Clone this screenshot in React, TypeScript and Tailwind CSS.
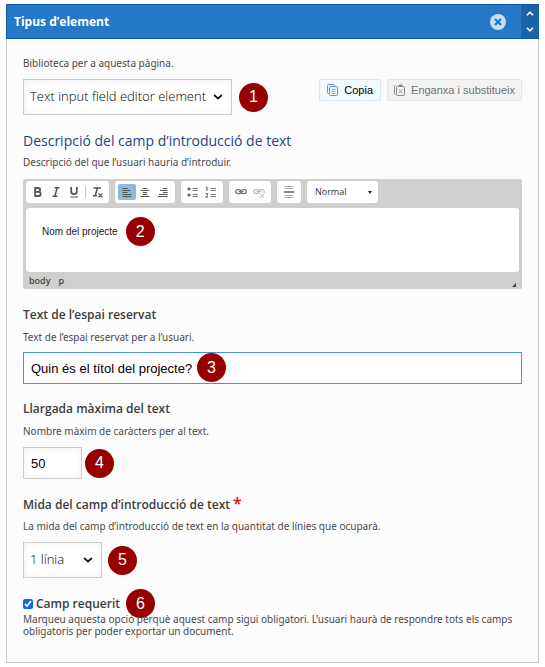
import type { ReactNode } from "react"
import { clsx } from "clsx"

// -----------------------------------------------------------------------------
// Small pieces
// -----------------------------------------------------------------------------

function StepBadge({ n, className }: { n: number; className?: string }) {
  return (
    <span
      className={clsx(
        "flex size-[29px] shrink-0 items-center justify-center rounded-full bg-[#970000]",
        "font-['Liberation_Sans'] text-base text-white",
        className
      )}
    >
      {n}
    </span>
  )
}

function Hint({ id, children }: { id?: string; children: ReactNode }) {
  return (
    <p id={id} className="font-['Noto_Sans'] text-[10px] leading-3 text-[#4a4a4a]">
      {children}
    </p>
  )
}

interface SelectBoxProps {
  id: string
  label?: string
  options: string[]
  className?: string
}

function SelectBox({ id, label, options, className }: SelectBoxProps) {
  return (
    <div className={clsx("relative", className)}>
      <select
        id={id}
        aria-label={label}
        className="block h-9 w-full appearance-none border border-[#ccc] bg-white pl-[6px] text-[13px] font-light text-black shadow-[inset_0_0_6px_#eee]"
      >
        {options.map((option) => (
          <option key={option}>{option}</option>
        ))}
      </select>
      <svg
        viewBox="0 0 10 6"
        className="pointer-events-none absolute top-[15px] right-[9px] h-[6px] w-[10px]"
        fill="none"
        stroke="#111"
        strokeWidth="1.8"
        aria-hidden
      >
        <path d="M1.2 1 5 4.6 8.8 1" />
      </svg>
    </div>
  )
}

// -----------------------------------------------------------------------------
// Editor toolbar
// -----------------------------------------------------------------------------

function ToolGroup({ children }: { children: ReactNode }) {
  return (
    <div className="flex h-[22px] items-center rounded-[3px] bg-white px-[3px]">
      {children}
    </div>
  )
}

interface ToolProps {
  label: string
  active?: boolean
  children: ReactNode
}

function Tool({ label, active, children }: ToolProps) {
  return (
    <button
      type="button"
      aria-label={label}
      aria-pressed={active}
      className={clsx(
        "flex h-4 w-[18px] items-center justify-center rounded-xs",
        active && "bg-[#8fb9e0]"
      )}
    >
      <svg
        viewBox="0 0 14 14"
        className="size-[14px]"
        fill="none"
        stroke="#555"
        aria-hidden
      >
        {children}
      </svg>
    </button>
  )
}

function EditorToolbar() {
  return (
    <div className="flex gap-[6px]">
      <ToolGroup>
        <Tool label="Negreta">
          <path d="M4.2 3h3a1.9 1.9 0 0 1 0 3.9h-3zM4.2 6.9h3.4a2 2 0 0 1 0 4.1H4.2z" strokeWidth="1.8" />
        </Tool>
        <Tool label="Cursiva">
          <path d="M5.5 2.8h5M3.5 11.2h5M8.2 2.8 5.8 11.2" strokeWidth="1.5" />
        </Tool>
        <Tool label="Subratllat">
          <path d="M4.2 2v4.6a2.8 2.6 0 0 0 5.6 0V2" strokeWidth="1.8" />
          <path d="M3 12h8" />
        </Tool>
        <span className="mx-[2px] h-3 w-px bg-[#ccc]" />
        <Tool label="Elimina el format">
          <path d="M3.5 3h7.5M7.5 3 5.2 10.5M3 10.8h4" strokeWidth="1.5" />
          <path d="m8.5 8.5 4 4M12.5 8.5l-4 4" strokeWidth="1.1" />
        </Tool>
      </ToolGroup>
      <ToolGroup>
        <Tool label="Alinea a l’esquerra" active>
          <path d="M2.5 3.5h5M2.5 5.5h8M2.5 7.5h5M2.5 9.5h9M2.5 11.5h9" />
        </Tool>
        <Tool label="Centra">
          <path d="M4.5 3.5h5M2.5 5.5h9M5 7.5h4M4.5 9.5h5M2.5 11.5h9" />
        </Tool>
        <Tool label="Alinea a la dreta">
          <path d="M7 3.5h4.500M4 5.500h7.500M7 7.500h4.500M3 9.500h8.500M2 11.500h9.500" />
        </Tool>
      </ToolGroup>
      <ToolGroup>
        <Tool label="Llista de pics">
          <circle cx="3" cy="4" r="1.1" fill="#555" />
          <circle cx="3" cy="10" r="1.1" fill="#555" />
          <path d="M6.5 3.5h5.500M6.500 5.500h5.500M6.500 9.500h5.500M6.500 11.500h5.500" stroke="#777" />
        </Tool>
        <Tool label="Llista numerada">
          <path d="M1.8 2.6 3 2v4M1.6 8.6h2v1.6l-2 1.8h2.4" />
          <path d="M6.5 3.5h5.500M6.500 5.500h5.500M6.500 9.500h5.500M6.500 11.500h5.500" stroke="#777" />
        </Tool>
      </ToolGroup>
      <ToolGroup>
        <Tool label="Enllaç">
          <g stroke="#777">
            <rect x="1.7" y="4.6" width="5.3" height="4" rx="2" strokeWidth="1.3" />
            <rect x="7" y="4.6" width="5.3" height="4" rx="2" strokeWidth="1.3" />
            <path d="M4.5 6.6h5" strokeWidth="1.2" />
          </g>
        </Tool>
        <Tool label="Elimina l’enllaç">
          <g stroke="#bbb">
            <path d="M7 6.6a2 2 0 0 1-2 2H3.7a2 2 0 0 1 0-4H5a2 2 0 0 1 2 2 2 2 0 0 1 2-2h1.3a2 2 0 0 1 1.5 3.2M4.5 6.6h5" strokeWidth="1.2" />
            <path d="m8 8.8 4 4M12 8.8l-4 4" />
          </g>
        </Tool>
      </ToolGroup>
      <ToolGroup>
        <Tool label="Línia horitzontal">
          <path d="M2.500 1.500h9M2.500 3.500h9M2.500 10.500h9M2.500 12.500h9" stroke="#aaa" />
          <path d="M2 7h10" strokeWidth="1.4" />
        </Tool>
      </ToolGroup>
      <div className="relative">
        <select
          aria-label="Format"
          className="block h-[22px] w-[71px] appearance-none rounded-[3px] bg-white pl-2 text-[9px] text-[#333]"
        >
          <option>Normal</option>
        </select>
        <span className="pointer-events-none absolute top-[10px] right-[6px] border-x-2 border-t-[3px] border-x-transparent border-t-[#222]" />
      </div>
    </div>
  )
}

function RichTextEditor() {
  return (
    <div className="mt-[11px] rounded-xs bg-[#cfcfcf] px-[3px] pt-[2px]">
      <EditorToolbar />
      <div
        role="textbox"
        aria-label="Descripció"
        className="mt-[5px] flex h-16 items-start rounded-[3px] bg-white px-4 pt-[9px]"
      >
        <div className="flex items-center gap-2">
          <p className="font-['Liberation_Sans'] text-[10px] text-[#222]">Nom del projecte</p>
          <StepBadge n={2} />
        </div>
      </div>
      <div className="flex h-[17px] items-center gap-2 px-[3px] text-[9px] font-semibold text-[#444]">
        <span>body</span>
        <span>p</span>
        <span className="mt-2 ml-auto border-b-4 border-l-4 border-b-[#444] border-l-transparent" />
      </div>
    </div>
  )
}

// -----------------------------------------------------------------------------
// Panel
// -----------------------------------------------------------------------------

function PanelHeader() {
  return (
    <header className="flex h-[35px] items-center border border-[#0f5aa6] bg-[#2579c6] pl-[7px] text-white">
      <h1 className="flex-1 text-[12px] font-bold">Tipus d’element</h1>
      <button type="button" aria-label="Elimina" className="mr-[15px]">
        <svg viewBox="0 0 16 16" className="size-4" aria-hidden>
          <circle cx="8" cy="8" r="8" fill="#c9def1" />
          <path d="m5 5 6 6M11 5l-6 6" stroke="#2579c6" strokeWidth="2.4" />
        </svg>
      </button>
      <div className="flex h-full w-[17px] flex-col items-center justify-around bg-[#1c62a6]">
        <button type="button" aria-label="Mou amunt">
          <svg viewBox="0 0 8 5" className="h-[5px] w-2" fill="none" stroke="#fff" strokeWidth="1.6" aria-hidden>
            <path d="M1 4.2 4 1.2l3 3" />
          </svg>
        </button>
        <button type="button" aria-label="Mou avall">
          <svg viewBox="0 0 8 5" className="h-[5px] w-2" fill="none" stroke="#fff" strokeWidth="1.6" aria-hidden>
            <path d="m1 .8 3 3 3-3" />
          </svg>
        </button>
      </div>
    </header>
  )
}

const labelClass = "block text-[12px] leading-[18px] font-semibold text-[#3c3c3c]"
const inputClass = "block h-8 border bg-white px-[7px] font-['Liberation_Sans'] text-[13px] text-black"
const actionClass = "flex h-[22px] items-center gap-[5px] rounded-xs border font-['Liberation_Sans'] text-[11px]"

export default function App() {
  return (
    <main className="bg-white px-[6px] pt-1 pb-[5px] font-['Open_Sans',sans-serif]">
      <PanelHeader />
      <form className="border border-t-0 border-[#c8c8c8] bg-[#fcfcfc] px-4 pt-[18px] pb-[25px]">
        <Hint>Biblioteca per a aquesta pàgina.</Hint>
        <div className="mt-[10px] flex items-start justify-between">
          <div className="flex items-center gap-[7px]">
            <SelectBox
              id="library"
              label="Biblioteca per a aquesta pàgina"
              options={["Text input field editor element"]}
              className="w-[209px]"
            />
            <StepBadge n={1} />
          </div>
          <div className="flex gap-[6px]">
            <button
              type="button"
              className={clsx(actionClass, "border-[#d8e8ee] bg-[#f2faff] px-[7px] text-black")}
            >
              <svg viewBox="0 0 12 12" className="size-3" fill="none" stroke="#6b8fc9" aria-hidden>
                <path d="M2 9.500h-.5a1 1 0 0 1-1-1v-7a1 1 0 0 1 1-1h5a1 1 0 0 1 1 1" />
                <rect x="2.5" y="2.5" width="8" height="9" rx="1" />
                <path d="M4.500 5.500h4M4.500 7.500h4M4.500 9.500h4" strokeWidth=".8" />
              </svg>
              Copia
            </button>
            <button
              type="button"
              className={clsx(actionClass, "border-[#e6e6e6] bg-[#f3f3f3] px-[6px] text-[#707070]")}
            >
              <svg viewBox="0 0 12 12" className="size-3" fill="none" stroke="#8a8a8a" aria-hidden>
                <path d="M2 10.500h-.5a1 1 0 0 1-1-1v-7a1 1 0 0 1 1-1H2" />
                <rect x="2.5" y="2.5" width="8" height="9" rx="1" />
                <path d="M4.500 1.500h4" strokeWidth="2" />
                <path d="m4.700 5.300 3.600 3.900M8.300 5.300 4.700 9.200" strokeWidth=".9" />
              </svg>
              Enganxa i substitueix
            </button>
          </div>
        </div>

        <h2 className="mt-4 text-[14px] leading-5 font-medium text-[#1f4780]">
          Descripció del camp d’introducció de text
        </h2>
        <div className="mt-[5px]">
          <Hint>Descripció del que l’usuari hauria d’introduir.</Hint>
        </div>
        <RichTextEditor />

        <div className="mt-[17px]">
          <label htmlFor="placeholder" className={labelClass}>
            Text de l’espai reservat
          </label>
          <div className="mt-[7px] mb-[9px]">
            <Hint>Text de l’espai reservat per a l’usuari.</Hint>
          </div>
          <div className="relative">
            <input
              id="placeholder"
              defaultValue="Quin és el títol del projecte?"
              className={clsx(inputClass, "w-full border-[#4a90e2]")}
            />
            <StepBadge n={3} className="absolute top-px left-[174px]" />
          </div>
        </div>

        <div className="mt-4">
          <label htmlFor="max-length" className={labelClass}>
            Llargada màxima del text
          </label>
          <div className="mt-[7px] mb-[10px]">
            <Hint>Nombre màxim de caràcters per al text.</Hint>
          </div>
          <div className="flex items-center gap-[3px]">
            <input
              id="max-length"
              defaultValue="50"
              className={clsx(inputClass, "w-[59px] border-[#ccc] shadow-[inset_0_0_6px_#eee]")}
            />
            <StepBadge n={4} />
          </div>
        </div>

        <div className="mt-4">
          <label htmlFor="field-size" className={labelClass}>
            Mida del camp d’introducció de text
            <span className="ml-[3px] text-base leading-none text-[#e01010]">*</span>
          </label>
          <div className="mt-[6px] mb-[10px]">
            <Hint>La mida del camp d’introducció de text en la quantitat de línies que ocuparà.</Hint>
          </div>
          <div className="flex items-center gap-[6px]">
            <SelectBox id="field-size" options={["1 línia"]} className="w-[79px]" />
            <StepBadge n={5} />
          </div>
        </div>

        <div className="mt-4 flex h-[19px] items-center">
          <input
            id="required"
            type="checkbox"
            defaultChecked
            aria-describedby="required-hint"
            className="mr-[3px] size-[10px] accent-[#0b6fe0]"
          />
          <label htmlFor="required" className={labelClass}>
            Camp requerit
          </label>
          <StepBadge n={6} className="ml-[6px]" />
        </div>
        <Hint id="required-hint">
          Marqueu aquesta opció perquè aquest camp sigui obligatori. L’usuari haurà de respondre tots els camps
          obligatoris per poder exportar un document.
        </Hint>
      </form>
    </main>
  )
}
